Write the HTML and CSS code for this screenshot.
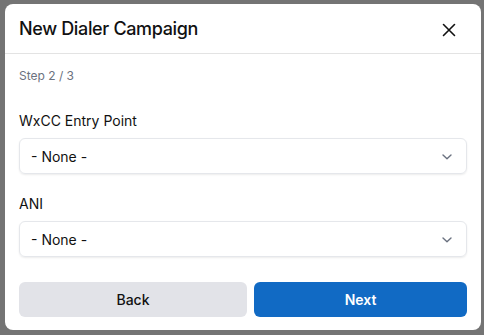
FILE: index.html
```html
<!DOCTYPE html>
<html>
<head>
<meta charset="utf-8">
<link rel="stylesheet" href="styles.css">
</head>
<body>
<div class="dialog">
  <div class="header">
    <h1 class="title">New Dialer Campaign</h1>
    <button class="close" aria-label="Close">
      <svg width="14" height="14" viewBox="0 0 14 14"><path d="M1.5 1.5 L12.5 12.5 M12.5 1.5 L1.5 12.5" stroke="#111" stroke-width="1.6" stroke-linecap="round" fill="none"/></svg>
    </button>
  </div>
  <div class="body">
    <div class="step">Step 2 / 3</div>
    <div class="field field-first">
      <label class="label">WxCC Entry Point</label>
      <div class="select"><span>- None -</span>
        <svg class="chev" width="10" height="6" viewBox="0 0 10 6"><path d="M1 1 L5 4.8 L9 1" stroke="#6b7280" stroke-width="1.4" fill="none" stroke-linecap="round" stroke-linejoin="round"/></svg>
      </div>
    </div>
    <div class="field">
      <label class="label">ANI</label>
      <div class="select"><span>- None -</span>
        <svg class="chev" width="10" height="6" viewBox="0 0 10 6"><path d="M1 1 L5 4.8 L9 1" stroke="#6b7280" stroke-width="1.4" fill="none" stroke-linecap="round" stroke-linejoin="round"/></svg>
      </div>
    </div>
    <div class="actions">
      <button class="btn back">Back</button>
      <button class="btn next">Next</button>
    </div>
  </div>
</div>
</body>
</html>
```
FILE: styles.css
```css
html, body {
  margin: 0;
  padding: 0;
  background: #747474;
  font-family: Inter, "Noto Sans", sans-serif;
  color: #111;
}
.dialog {
  margin: 4px 0 0 5px;
  width: 476px;
  height: 326px;
  background: #fff;
  border-radius: 8px;
  box-sizing: border-box;
  overflow: hidden;
}
.header {
  height: 49px;
  border-bottom: 1px solid #e3e3e3;
  display: flex;
  align-items: center;
  justify-content: space-between;
  padding: 0 25px 0 14px;
}
.title {
  margin: 0;
  font-size: 18px;
  font-weight: 500;
  letter-spacing: -0.35px;
  color: #111;
}
.close {
  border: 0;
  background: none;
  padding: 0;
  width: 14px;
  height: 14px;
  display: flex;
  margin-top: 2px;
}
.body {
  padding: 14px 14px 0 14px;
}
.step {
  font-size: 12px;
  color: #6b7280;
  line-height: 16px;
}
.field {
  display: flex;
  flex-direction: column;
  margin-top: 21px;
}
.field-first {
  margin-top: 28px;
}
.label {
  font-size: 14px;
  line-height: 18px;
  color: #111;
  margin-bottom: 8px;
}
.select {
  height: 36px;
  box-sizing: border-box;
  border: 1px solid #e5e7eb;
  border-radius: 6px;
  box-shadow: 0 1px 2px rgba(0,0,0,0.08);
  display: flex;
  align-items: center;
  justify-content: space-between;
  padding: 0 14px 0 11px;
  font-size: 14px;
  color: #111;
}
.chev {
  display: block;
  margin-top: 1px;
}
.actions {
  display: grid;
  grid-template-columns: 228px 1fr;
  gap: 7px;
  margin-top: 25px;
}
.btn {
  height: 35px;
  border: 0;
  border-radius: 6px;
  font-family: Inter, "Noto Sans", sans-serif;
  font-size: 14px;
  font-weight: 500;
}
.back {
  background: #e2e3e8;
  color: #111;
}
.next {
  background: #116ac4;
  color: #fff;
  font-weight: 600;
}
```
